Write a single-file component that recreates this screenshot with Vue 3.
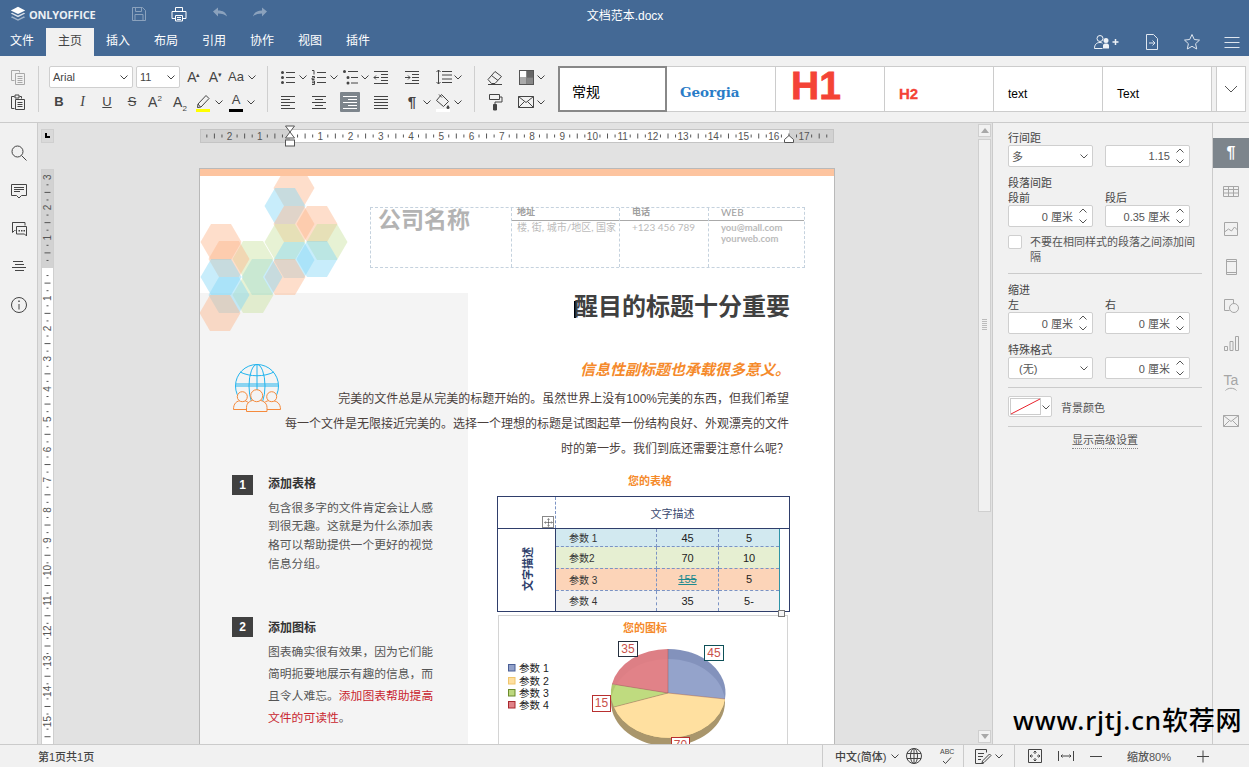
<script setup>
import { h } from 'vue'

const P = {
  search: 'M8.5 3a5.5 5.5 0 1 1 0 11 5.5 5.5 0 0 1 0-11zM12.5 12.5l5 5',
  comment: 'M2.5 3.5h15v11h-5L10 17l-2.5-2.5h-5zM5 6.5h10M5 8.5h10M5 10.5h6',
  chat: 'M3.5 6.5v-3h12.5v3M3.5 3.5v10l2-2h1M7.5 7.5h10v9.5l-2-2h-8z',
  nav: 'M4 4.5h10M6 7.5h9M3 10.5h14M6 13.5h9',
  info: 'M10 2.5a7.5 7.5 0 1 1 0 15 7.5 7.5 0 0 1 0-15zM10 9v5.5',
  save: 'M3.5 3.5h10l3 3v10h-13zM6.5 3.5v4h6v-4M6 16.5v-6h8v6',
  print: 'M6.5 7V3.5h7V7M6.5 14.5h-3.5v-7h14v7h-3.5M6.5 11.5h7v5.5h-7zM8 13.5h4M8 15.5h4',
  copy: 'M3.5 13.5v-10h8v2M6.5 13.5h-3M7.5 6.5h9v11h-9zM9.5 9.5h5M9.5 11.5h5M9.5 13.5h5M9.5 15.5h5',
  paste: 'M6.5 16.5h-3v-12h3M11.5 4.5h2v2M7 3h4v3H7zM7.5 7.5h9v10h-9zM9.5 10.5h5M9.5 12.5h5M9.5 14.5h5',
  bullets: 'M8 5.5h9M8 10.5h9M8 15.5h9',
  numbers: 'M8 5.5h9M8 10.5h9M8 15.5h9M3 3.5h2v4M3 9.5h2.5V11H3v1.5h2.5M3 14h2.5v3.5H3M3 15.7h2.5',
  multi: 'M7 4.5h10M10 10.5h7M10 16h7',
  dec: 'M3 4.5h14M10 7.5h7M10 10.5h7M10 13.5h7M3 16.5h14M8 10.5H3M5 8.5l-2 2 2 2',
  inc: 'M3 4.5h14M10 7.5h7M10 10.5h7M10 13.5h7M3 16.5h14M3 10.5h5M6 8.5l2 2-2 2',
  spacing: 'M8 4.5h10M8 8h10M8 12h10M8 15.5h10M4.5 3v14M2.5 5l2-2 2 2M2.5 15l2 2 2-2',
  left: 'M3 4.5h14M3 7.5h9M3 10.5h14M3 13.5h9M3 16.5h14',
  center: 'M3 4.5h14M6 7.5h8M3 10.5h14M6 13.5h8M3 16.5h14',
  right: 'M3 4.5h14M8 7.5h9M3 10.5h14M8 13.5h9M3 16.5h14',
  justify: 'M3 4.5h14M3 7.5h14M3 10.5h14M3 13.5h14M3 16.5h14',
  erase: 'M3 12.5 10 4.5l6.5 5-6.5 7H6.5zM6.5 8.5l6.5 5M3 17.5h14',
  brush: 'M4.5 2.5h10v5h-10zM14.5 5H17v5h-7v2M8.5 12.5h3V18h-3z',
  mail: 'M2.5 4.5h15v11h-15zM2.5 4.5l7.5 6 7.5-6M2.5 15.5l6-6M17.5 15.5l-6-6',
  pen: 'M5 12l8-8.5 3 3-8 8.5-3.5.5zM5 12l2.5 3',
  bucket: 'M8.5 2.5l7 7-5 5-7-6zM6 2.5l3 3',
  caret: 'M6.5 8.5 10 12l3.5-3.5',
  up: 'M6.5 11.5 10 8l3.5 3.5',
  chev: 'M4 7l6 6 6-6',
  file: 'M4.5 2.5h7l4 4v11h-11zM7 11h6M10.5 8.5 13 11l-2.5 2.5',
  star: 'M10 2.5l2.3 5 5.2.6-3.9 3.6 1.1 5.3-4.7-2.7-4.7 2.7 1.1-5.3-3.9-3.6 5.2-.6z',
  menu: 'M2.5 5.5h15M2.5 10.5h15M2.5 15.5h15',
  page: 'M3.5 3.5h13v13h-13zM10 5v3M8.5 6.5 10 5l1.5 1.5M10 15v-3M8.5 13.5 10 15l1.5-1.5M5 10h3M6.5 8.5 5 10l1.5 1.5M15 10h-3M13.5 8.5 15 10l-1.5 1.5',
  width: 'M2.5 5v10M17.5 5v10M5 10h10M6.5 8.5 5 10l1.5 1.5M13.5 8.5 15 10l-1.5 1.5',
  minus: 'M4 10.5h12',
  plus: 'M4 10.5h12M10 4.5v12',
  globe: 'M10 2.5a7.5 7.5 0 1 1 0 15 7.5 7.5 0 0 1 0-15zM10 2.5a3.5 7.5 0 1 1 0 15 3.5 7.5 0 0 1 0-15zM10 2.5v15M3 7.5h14M3 12.5h14',
  check: 'M9 15l2.5 2.5 5.5-6',
  note: 'M13.5 6.5v-3h-11v14h8M5 7.5h6M5 10.5h5M5 13.5h3M9.5 15l7-7 1.5 1.5-7 7-2 .5z',
  table: 'M2.5 5.5h15v10h-15zM2.5 8.5h15M2.5 12h15M7.5 5.5v10M12.5 5.5v10',
  image: 'M3.5 3.5h13v13h-13zM3.5 13l4-3 3 2 3-4 3 3',
  header: 'M5.5 2.5h10v15h-10zM5.5 4.5h10M5.5 15.5h10',
  shape: 'M8.5 15.5h-5v-11h9v4M13 8.5a4.5 4.5 0 1 1 0 9 4.5 4.5 0 0 1 0-9z',
  chart: 'M3.5 13.5h3v4h-3zM9 8.5h3v9H9zM14.5 3.5h3v14h-3z',
  move: 'M10 3v14M3 10h14M8 5l2-2 2 2M8 15l2 2 2-2M5 8l-2 2 2 2M15 8l2 2-2 2',
}
const F = {
  bullets: 'M4.5 4a1.5 1.5 0 1 0 0 3 1.5 1.5 0 0 0 0-3zM4.5 9a1.5 1.5 0 1 0 0 3 1.5 1.5 0 0 0 0-3zM4.5 14a1.5 1.5 0 1 0 0 3 1.5 1.5 0 0 0 0-3z',
  multi: 'M3.5 3a1.5 1.5 0 1 0 0 3 1.5 1.5 0 0 0 0-3zM7 9a1.5 1.5 0 1 0 0 3 1.5 1.5 0 0 0 0-3zM7 14.5a1.5 1.5 0 1 0 0 3 1.5 1.5 0 0 0 0-3z',
  info: 'M9.3 5.5h1.4v1.4H9.3z',
  chat: 'M9.5 11H11v1.5H9.5zM12 11h1.5v1.5H12zM14.5 11H16v1.5h-1.5z',
  undo: 'M3 7.5 8 3.5v3c5 0 8 2 9 6-2-2-5-3-9-3v3z',
  redo: 'M17 7.5l-5-4v3c-5 0-8 2-9 6 2-2 5-3 9-3v3z',
  brush: 'M8.5 12.5h3V18h-3z',
  bucket: 'M15 13c1.2 1.5 1.5 2 1.5 2.5a1.5 1.5 0 0 1-3 0c0-.5.3-1 1.5-2.5z',
}
const Ico = (props) =>
  h('svg', { width: 20, height: 20, viewBox: '0 0 20 20', class: 'ico', fill: 'none', stroke: 'currentColor' }, [
    P[props.n] ? h('path', { d: P[props.n] }) : null,
    F[props.n] ? h('path', { d: F[props.n], fill: 'currentColor', stroke: 'none' }) : null,
  ])
Ico.props = ['n']

const fontRow1 = [
  { t: 'A', cls: 'grow-a', w: 24, mark: '▴' }, { t: 'A', cls: 'shrink-a', w: 19, mark: '▾' }, { t: 'Aa', cls: 'aa', w: 26 }, { i: 'caret', w: 5 },
]
const fontRow2 = [
  { t: 'B', cls: 'b', w: 20 }, { t: 'I', cls: 'it', w: 27 }, { t: 'U', cls: 'u', w: 22 }, { t: 'S', cls: 's', w: 28 },
  { t: 'A', cls: 'sup', sup: '2', w: 18 }, { t: 'A', cls: 'sub', sub: '2', w: 32 },
  { i: 'pen', bar: '#ffff00', w: 14 }, { i: 'caret', w: 17 }, { t: 'A', bar: '#000', cls: 'col', w: 18 }, { i: 'caret', w: 12 },
]
const listRow1 = [
  { i: 'bullets', w: 20 }, { i: 'caret', w: 10 }, { i: 'numbers', w: 21 }, { i: 'caret', w: 10 }, { i: 'multi', w: 24 }, { i: 'caret', w: 4 },
  { i: 'dec', w: 28 }, { i: 'inc', w: 34 }, { w: 4.5 }, { i: 'spacing', w: 20 }, { i: 'caret', w: 9 },
]
const listRow2 = [
  { i: 'left', w: 20 }, { i: 'center', w: 41 }, { w: 1 }, { i: 'right', w: 20, on: true }, { i: 'justify', w: 42 },
  { t: '¶', cls: 'pil', w: 20 }, { i: 'caret', w: 10 }, { i: 'bucket', bar: '#fff', w: 22 }, { i: 'caret', w: 8 },
]
const styles = [
  { t: '常规', cls: 'st-normal' }, { t: 'Georgia', cls: 'st-georgia' }, { t: 'H1', cls: 'st-h1' },
  { t: 'H2', cls: 'st-h2' }, { t: 'text', cls: 'st-text' }, { t: 'Text', cls: 'st-text' },
]
const sideIcons = ['table', 'image', 'header', 'shape', 'chart']

/* rulers */
const cm = 30.24
const hTicks = []
const hNums = []
for (let k = -11; k <= 71; k++) {
  if (k === 0) continue
  const x = 90 + (k * cm) / 4
  if (x > 632) continue
  if (k % 4 === 0) hNums.push({ x, t: Math.abs(k / 4) })
  else hTicks.push({ x, len: Math.abs(k % 2) === 0 ? 5 : 3 })
}
const vTicks = []
const vNums = []
for (let k = -12; k <= 62; k++) {
  if (k === 0) continue
  const y = 99 + (k * cm) / 4
  if (k % 4 === 0) vNums.push({ y, t: Math.abs(k / 4) })
  else vTicks.push({ y, len: Math.abs(k % 2) === 0 ? 6 : 2 })
}

/* hexagons */
const hexSrc = [
  ['p', 294, 188], ['b', 285, 206], ['p', 294, 224], ['p', 317, 224], ['g', 285, 242], ['g', 327, 242], ['b', 294, 260], ['b', 317, 259],
  ['p', 285, 277], ['b', 262, 277], ['g', 253, 259], ['g', 253, 295], ['p', 221, 242], ['p', 229, 259],
  ['b', 221, 277], ['b', 229, 295], ['p', 220, 313],
]
const hexColor = { p: '#fcb58c', b: '#86d6f6', g: '#c9e3a0' }
const hexes = hexSrc.map(([c, x, y]) => ({
  fill: hexColor[c],
  pts: [[x - 20.5, y], [x - 10, y - 18], [x + 10, y - 18], [x + 20.5, y], [x + 10, y + 18], [x - 10, y + 18]].map((p) => p.join(',')).join(' '),
}))

const tableRows = [
  { cls: 'r1', a: '参数 1', b: '45', c: '5' },
  { cls: 'r2', a: '参数2', b: '70', c: '10' },
  { cls: 'r3', a: '参数 3', b: '155', c: '5', link: true },
  { cls: 'r4', a: '参数 4', b: '35', c: '5-' },
]
const legend = [
  { t: '参数 1', f: '#92a1c9', s: '#4a5f96', y: 668 },
  { t: '参数 2', f: '#fedf9f', s: '#f0c56d', y: 681 },
  { t: '参数 3', f: '#bdd87f', s: '#6b8a2c', y: 693 },
  { t: '参数 4', f: '#e18288', s: '#a8282e', y: 705 },
]
const slices = [
  { d: 'M668 693L668 649A57 44 0 0 1 725 699Z', dark: '#8392bc', light: '#94a3cb' },
  { d: 'M668 693L725 699A57 44 0 0 1 614 707Z', dark: '#f5d78f', light: '#ffe0a0' },
  { d: 'M668 693L614 707A57 44 0 0 1 612 684Z', dark: '#b2c96f', light: '#bfdb7f' },
  { d: 'M668 693L612 684A57 44 0 0 1 668 649Z', dark: '#dd7f85', light: '#e18288' },
]
const labels = [
  { t: '35', x: 618, y: 641, w: 19, h: 15, s: '#26303f' },
  { t: '45', x: 704, y: 645, w: 19, h: 15, s: '#0e5058' },
  { t: '15', x: 592, y: 695, w: 18, h: 16, s: '#b82f2f' },
  { t: '70', x: 671, y: 737, w: 18, h: 15, s: '#b82f2f' },
]
</script>

<template>
  <div class="app">
    <header class="head">
      <div class="title-row">
        <div class="logo">
          <svg width="18" height="20" viewBox="0 0 20 20" class="ico">
            <path d="M10 2 18 6 10 10 2 6z" fill="#fff" />
            <path d="M3.5 8.5 10 11.8l6.5-3.3 1.5 1L10 13.5 2 9.5z" fill="#fff" opacity=".8" />
            <path d="M3.5 12.5 10 15.8l6.5-3.3 1.5 1L10 17.5 2 13.5z" fill="#fff" opacity=".5" />
          </svg>
          <span class="logo-text">ONLYOFFICE</span>
        </div>
        <div class="quick">
          <span class="q dim"><Ico n="save" /></span>
          <span class="q"><Ico n="print" /></span>
          <span class="q dim"><Ico n="undo" /></span>
          <span class="q dim"><Ico n="redo" /></span>
        </div>
        <div class="doc-name">文档范本.docx</div>
      </div>
      <div class="tab-row">
        <nav class="tabs">
          <span class="tab">文件</span>
          <span class="tab active">主页</span>
          <span class="tab">插入</span>
          <span class="tab">布局</span>
          <span class="tab">引用</span>
          <span class="tab">协作</span>
          <span class="tab">视图</span>
          <span class="tab">插件</span>
        </nav>
        <div class="head-right">
          <svg class="ico hr-user" width="28" height="20" viewBox="0 0 28 20" fill="none" stroke="currentColor">
            <path d="M7 3.5a3 3 0 1 1 0 6 3 3 0 0 1 0-6zM1.5 16.5c0-4 2-6 5.5-6 1 0 2 .2 2.5.7M1.5 16.5h8" />
            <path d="M13 6a2.5 2.5 0 1 1 0 5 2.5 2.5 0 0 1 0-5zM10 16.5v-3c0-1.5 1.5-2 3-2s3 .5 3 2v3z" fill="currentColor" stroke="none" />
            <path d="M22.5 7v6M19.5 10h6" stroke-width="1.5" />
          </svg>
          <span class="hr hr-file"><Ico n="file" /></span>
          <span class="hr hr-star"><Ico n="star" /></span>
          <span class="hr hr-menu"><Ico n="menu" /></span>
        </div>
      </div>
    </header>

    <section class="toolbar">
      <div class="grp g1">
        <div class="cellrow"><span class="cell dim-ico wide"><Ico n="copy" /></span></div>
        <div class="cellrow r2"><span class="cell wide"><Ico n="paste" /></span></div>
      </div>
      <div class="grp g2">
        <div class="cellrow">
          <div class="combo font-c"><span>Arial</span><Ico n="caret" /></div>
          <div class="combo size-c"><span>11</span><Ico n="caret" /></div>
          <span v-for="(c, k) in fontRow1" :key="k" class="cell" :style="{ width: c.w + 'px' }">
            <Ico v-if="c.i" :n="c.i" />
            <span v-else class="tx" :class="c.cls">{{ c.t }}<i v-if="c.mark" class="mark">{{ c.mark }}</i></span>
          </span>
        </div>
        <div class="cellrow r2">
          <span v-for="(c, k) in fontRow2" :key="k" class="cell" :style="{ width: c.w + 'px' }">
            <Ico v-if="c.i" :n="c.i" />
            <span v-else class="tx" :class="c.cls">{{ c.t }}<sup v-if="c.sup">{{ c.sup }}</sup><sub v-if="c.sub">{{ c.sub }}</sub></span>
            <i v-if="c.bar" class="bar" :style="{ background: c.bar }"></i>
          </span>
        </div>
      </div>
      <div class="grp g3">
        <div class="cellrow">
          <span v-for="(c, k) in listRow1" :key="k" class="cell" :style="{ width: c.w + 'px' }"><Ico v-if="c.i" :n="c.i" /></span>
        </div>
        <div class="cellrow r2">
          <span v-for="(c, k) in listRow2" :key="k" class="cell" :class="{ on: c.on }" :style="{ width: c.w + 'px' }">
            <Ico v-if="c.i" :n="c.i" />
            <span v-else-if="c.t" class="tx" :class="c.cls">{{ c.t }}</span>
            <i v-if="c.bar" class="bar" :style="{ background: c.bar }"></i>
          </span>
        </div>
      </div>
      <div class="grp g4">
        <div class="cellrow">
          <span class="cell w20"><Ico n="erase" /></span>
          <span class="spacer"></span>
          <span class="cell w20">
            <svg width="15" height="15" viewBox="0 0 15 15" class="ico">
              <rect width="15" height="15" fill="#555" />
              <rect x="1" y="1" width="6.5" height="6.5" fill="#fff" />
              <rect x="7.5" y="1" width="6.5" height="6.5" fill="#666" />
              <rect x="1" y="7.5" width="6.5" height="6.5" fill="#aaa" />
              <rect x="7.5" y="7.5" width="6.5" height="6.5" fill="#888" />
            </svg>
          </span>
          <span class="cell w10"><Ico n="caret" /></span>
        </div>
        <div class="cellrow r2">
          <span class="cell w20"><Ico n="brush" /></span>
          <span class="spacer"></span>
          <span class="cell w20"><Ico n="mail" /></span>
          <span class="cell w10"><Ico n="caret" /></span>
        </div>
      </div>
      <div class="gallery">
        <div v-for="(s, k) in styles" :key="k" class="style-item" :class="{ sel: k === 0 }">
          <span :class="s.cls">{{ s.t }}</span>
        </div>
        <div class="gal-gap"></div>
        <div class="gal-more"><Ico n="chev" /></div>
      </div>
    </section>

    <main class="main">
      <aside class="left-bar">
        <span class="lb"><Ico n="search" /></span>
        <span class="lb"><Ico n="comment" /></span>
        <span class="lb"><Ico n="chat" /></span>
        <span class="lb"><Ico n="nav" /></span>
        <span class="lb"><Ico n="info" /></span>
      </aside>

      <div class="canvas">
        <div class="corner"><i></i></div>
        <svg class="h-ruler" width="634" height="14" viewBox="0 0 634 14">
          <rect width="634" height="14" fill="#d2d2d2" />
          <rect x="90" y="0" width="499" height="14" fill="#fff" />
          <rect x=".5" y=".5" width="633" height="13" fill="none" stroke="#c4c4c4" />
          <line v-for="(t, k) in hTicks" :key="k" :x1="t.x" :x2="t.x" :y1="7 - t.len / 2" :y2="7 + t.len / 2" stroke="#555" />
          <text v-for="n in hNums" :key="n.x" :x="n.x" y="10.5" text-anchor="middle" class="r-num">{{ n.t }}</text>
          <path d="M85.5 -3h9l-4.5 6 4.5 6h-9l4.5-6z" fill="#fff" stroke="#555" />
          <rect x="85.5" y="11" width="9" height="6" fill="#fff" stroke="#555" />
          <path d="M584.5 13.5v-3l4.5-4 4.5 4v3z" fill="#fff" stroke="#555" />
        </svg>
        <svg class="v-ruler" width="13" height="575" viewBox="0 0 13 575">
          <rect width="13" height="575" fill="#fff" />
          <rect width="13" height="99" fill="#d2d2d2" />
          <rect x=".5" y=".5" width="12" height="580" fill="none" stroke="#cfcfcf" />
          <line v-for="t in vTicks" :key="t.y" :x1="6.5 - t.len / 2" :x2="6.5 + t.len / 2" :y1="t.y" :y2="t.y" stroke="#555" />
          <text v-for="n in vNums" :key="n.y" x="6.5" :y="n.y + 3.5" text-anchor="middle" class="r-num"
            :transform="`rotate(-90 6.5 ${n.y})`">{{ n.t }}</text>
        </svg>

        <article class="page">
          <div class="band"></div>
          <svg class="hexes" width="150" height="160" viewBox="200 176 150 160">
            <polygon v-for="(x, k) in hexes" :key="k" :points="x.pts" :fill="x.fill" fill-opacity=".45" />
          </svg>

          <div class="doc-head">
            <div class="dh-cell dh-co">公司名称</div>
            <div class="dh-cell dh-a"><b>地址</b><p>楼, 街, 城市/地区, 国家</p></div>
            <div class="dh-cell dh-b"><b>电话</b><p>+123 456 789</p></div>
            <div class="dh-cell dh-c"><b class="web">WEB</b><p class="strong">you@mall.com<br />yourweb.com</p></div>
          </div>

          <h1 class="doc-title"><i class="cursor"></i>醒目的标题十分重要</h1>
          <h2 class="doc-sub">信息性副标题也承载很多意义。</h2>

          <div class="intro">
            <svg class="world" width="48" height="48" viewBox="0 0 48 48" fill="none">
              <g stroke="#22b4ee" stroke-width="1">
                <circle cx="24" cy="22" r="21.5" />
                <ellipse cx="24" cy="22" rx="8" ry="21.5" />
                <path d="M24 .5v43M3 20h42M3 22h42M7 8c10 5 24 5 34 0" />
              </g>
              <g stroke="#f58a3c" fill="#f4f4f4" stroke-width="1">
                <path d="M.5 45.5c0-6 3-9 8.5-9s9 3 9 9z" />
                <path d="M29 45.5c0-6 3-9 9-9s9.5 3 9.5 9z" />
                <circle cx="9.3" cy="32.7" r="5" />
                <circle cx="38.7" cy="32.7" r="5" />
                <path d="M13.5 47.5v-4c0-5 4-7.5 10-7.5s10.5 2.5 10.5 7.5v4z" />
                <circle cx="23.7" cy="31.7" r="6" />
              </g>
            </svg>
            完美的文件总是从完美的标题开始的。虽然世界上没有100%完美的东西，但我们希望<br />
            每一个文件是无限接近完美的。选择一个理想的标题是试图起草一份结构良好、外观漂亮的文件<br />
            时的第一步。我们到底还需要注意什么呢？
          </div>

          <div class="cols">
            <div class="col-left">
              <section class="step s1">
                <span class="num">1</span>
                <div class="step-text">
                  <h3>添加表格</h3>
                  <p>包含很多字的文件肯定会让人感<br />到很无趣。这就是为什么添加表<br />格可以帮助提供一个更好的视觉<br />信息分组。</p>
                </div>
              </section>
              <section class="step s2">
                <span class="num">2</span>
                <div class="step-text">
                  <h3>添加图标</h3>
                  <p>图表确实很有效果，因为它们能<br />简明扼要地展示有趣的信息，而<br />且令人难忘。<span class="red">添加图表帮助提高<br />文件的可读性</span>。</p>
                </div>
              </section>
            </div>

            <div class="col-right">
              <div class="cap">您的表格</div>
              <div class="tbl-wrap">
                <table class="tbl">
                  <colgroup>
                    <col class="c58" /><col class="c101" /><col class="c62" /><col class="c61" /><col class="c11" />
                  </colgroup>
                  <tbody>
                    <tr class="thead">
                      <td class="corner-td"></td>
                      <td colspan="4" class="th-main">文字描述</td>
                    </tr>
                    <tr v-for="(r, k) in tableRows" :key="k" :class="r.cls">
                      <td v-if="k === 0" rowspan="4" class="vert-td"><span class="vert">文字描述</span></td>
                      <td class="lab">{{ r.a }}</td>
                      <td class="n"><span :class="{ link155: r.link }">{{ r.b }}</span></td>
                      <td class="n">{{ r.c }}</td>
                      <td v-if="k === 0" rowspan="4" class="tail"></td>
                    </tr>
                  </tbody>
                </table>
                <span class="move"><Ico n="move" /></span>
                <span class="resize"></span>
              </div>
              <div class="chart">
                <svg width="288" height="150" viewBox="499 616 288 150">
                  <text x="645" y="632" text-anchor="middle" class="ch-title">您的图标</text>
                  <g v-for="l in legend" :key="l.t">
                    <rect x="508.5" :y="l.y - 3.5" width="6.5" height="6.5" :fill="l.f" :stroke="l.s" />
                    <text x="519" :y="l.y + 4" class="ch-leg">{{ l.t }}</text>
                  </g>
                  <ellipse cx="668" cy="702" rx="57" ry="44" fill="#a9966c" />
                  <defs>
                    <clipPath id="innerPie"><ellipse cx="668" cy="703" rx="57" ry="44" /></clipPath>
                  </defs>
                  <path v-for="s in slices" :key="s.d" :d="s.d" :fill="s.dark" />
                  <g clip-path="url(#innerPie)">
                    <path v-for="s in slices" :key="s.d" :d="s.d" :fill="s.light" />
                  </g>
                  <path d="M668 693V649M668 693l57 6M668 693l-54 14M668 693l-56-9" stroke="#9a5a5a" stroke-opacity=".45" fill="none" />
                  <g v-for="l in labels" :key="l.t">
                    <rect :x="l.x + .5" :y="l.y + .5" :width="l.w" :height="l.h" fill="#fff" :stroke="l.s" />
                    <text :x="l.x + l.w / 2 + .5" :y="l.y + 12" text-anchor="middle" class="ch-lab">{{ l.t }}</text>
                  </g>
                </svg>
              </div>
            </div>
          </div>
        </article>

        <div class="vscroll">
          <span class="sb-btn"><i class="tri-up"></i></span>
          <span class="sb-thumb"><i></i></span>
          <span class="sb-fill"></span>
          <span class="sb-btn"><i class="tri-down"></i></span>
        </div>
      </div>

      <aside class="panel">
        <div class="lbl">行间距</div>
        <div class="two">
          <div class="inp sel-i"><span>多</span><Ico n="caret" /></div>
          <div class="inp num-i"><span>1.15</span><span class="spin"><Ico n="up" /><Ico n="caret" /></span></div>
        </div>
        <div class="lbl mt7">段落间距</div>
        <div class="two sub-lbl"><span>段前</span><span>段后</span></div>
        <div class="two">
          <div class="inp num-i"><span>0 厘米</span><span class="spin"><Ico n="up" /><Ico n="caret" /></span></div>
          <div class="inp num-i"><span>0.35 厘米</span><span class="spin"><Ico n="up" /><Ico n="caret" /></span></div>
        </div>
        <label class="chk"><i class="box"></i><span>不要在相同样式的段落之间添加间隔</span></label>
        <hr class="sep s8" />
        <div class="lbl mt7">缩进</div>
        <div class="two sub-lbl"><span>左</span><span>右</span></div>
        <div class="two">
          <div class="inp num-i"><span>0 厘米</span><span class="spin"><Ico n="up" /><Ico n="caret" /></span></div>
          <div class="inp num-i"><span>0 厘米</span><span class="spin"><Ico n="up" /><Ico n="caret" /></span></div>
        </div>
        <div class="lbl mt7">特殊格式</div>
        <div class="two">
          <div class="inp sel-i none"><span>(无)</span><Ico n="caret" /></div>
          <div class="inp num-i"><span>0 厘米</span><span class="spin"><Ico n="up" /><Ico n="caret" /></span></div>
        </div>
        <hr class="sep s8" />
        <div class="bg-row">
          <div class="color-btn">
            <svg width="31" height="17" viewBox="0 0 31 17"><rect x=".5" y=".5" width="30" height="16" fill="#fff" stroke="#ccc" /><path d="M1 16 30 1" stroke="#e8222c" /></svg>
            <Ico n="caret" />
          </div>
          <span>背景颜色</span>
        </div>
        <hr class="sep s9" />
        <div class="adv"><span>显示高级设置</span></div>
      </aside>

      <aside class="side-tabs">
        <span class="st active-st">¶</span>
        <span v-for="n in sideIcons" :key="n" class="st"><Ico :n="n" /></span>
        <span class="st ta">
          <span>Ta</span>
          <svg width="12" height="4" viewBox="0 0 12 4" fill="none" stroke="currentColor"><path d="M.5 3.5C3 .5 9 .5 11.5 3.5" /></svg>
        </span>
        <span class="st"><Ico n="mail" /></span>
      </aside>
    </main>

    <footer class="status">
      <span class="pages">第1页共1页</span>
      <div class="stat-right">
        <span class="st-lang">中文(简体)</span>
        <span class="w-caret"><Ico n="caret" /></span>
        <span class="w-globe"><Ico n="globe" /></span>
        <span class="w-abc"><span class="abc">ABC</span><Ico n="check" /></span>
        <span class="w-note"><Ico n="note" /></span>
        <span class="w-caret2"><Ico n="caret" /></span>
        <span class="w-page"><Ico n="page" /></span>
        <span class="w-width"><Ico n="width" /></span>
        <span class="w-minus"><Ico n="minus" /></span>
        <span class="w-zoom">缩放80%</span>
        <span class="w-plus"><Ico n="plus" /></span>
      </div>
    </footer>

    <div class="watermark">www.rjtj.cn软荐网</div>
  </div>
</template>

<style>
html, body { margin: 0; padding: 0; }
</style>

<style scoped>
.app {
  position: relative;
  width: 1249px;
  height: 767px;
  display: flex;
  flex-direction: column;
  overflow: hidden;
  font-family: "Liberation Sans", "Noto Sans CJK SC", sans-serif;
  font-size: 12px;
  color: #444;
  background: #f1f1f1;
}
.ico { display: block; flex-shrink: 0; overflow: visible; }

/* header */
.head { background: #446995; color: #fff; height: 56px; flex-shrink: 0; }
.title-row { height: 28px; display: flex; align-items: center; position: relative; }
.logo { display: flex; align-items: center; margin-left: 9px; width: 110px; }
.logo-text { font-size: 11px; font-weight: 700; margin-left: 2px; opacity: .9; font-family: "Open Sans", "Liberation Sans", sans-serif; letter-spacing: -.2px; }
.quick { display: flex; }
.q { width: 40.3px; display: flex; justify-content: center; }
.q.dim { opacity: .38; }
.doc-name { position: absolute; left: 0; right: 0; text-align: center; font-size: 12px; padding-left: 1px; }
.tab-row { height: 28px; display: flex; justify-content: space-between; }
.tabs { display: flex; margin-left: -2px; }
.tab { width: 48px; text-align: center; line-height: 27px; }
.tab.active { background: #f1f1f1; color: #444; }
.head-right { display: flex; align-items: center; }
.hr-user { margin-right: 21px; color: #eef2f7; }
.hr { display: flex; color: #dfe6ef; }
.hr-file { margin-right: 20px; }
.hr-star { margin-right: 20px; }
.hr-menu { margin-right: 7px; }

/* toolbar */
.toolbar {
  height: 67px; flex-shrink: 0; box-sizing: border-box; padding-top: 10px;
  display: flex; align-items: flex-start; border-bottom: 1px solid #cbcbcb; background: #f1f1f1; color: #444;
}
.grp { height: 46px; box-sizing: border-box; flex-shrink: 0; }
.g1 { width: 39px; border-right: 1px solid #cfcfcf; }
.g2 { width: 229px; border-right: 1px solid #cfcfcf; padding-left: 10px; }
.g3 { width: 207px; border-right: 1px solid #cfcfcf; padding-left: 10px; }
.g4 { width: 83px; padding-left: 10px; }
.cellrow { height: 22px; display: flex; align-items: center; }
.cellrow.r2 { height: 20px; margin-top: 4px; }
.cell { height: 20px; display: flex; align-items: center; justify-content: center; flex-shrink: 0; position: relative; }
.wide { width: 36px; }
.w20 { width: 20px; }
.w10 { width: 10px; }
.spacer { width: 11px; flex-shrink: 0; }
.dim-ico { color: #a8a8a8; }
.cell.on { background: #7d858c; color: #fff; border-radius: 1px; }
.combo {
  height: 22px; box-sizing: border-box; background: #fff; border: 1px solid #cfcfcf; border-radius: 2px;
  display: flex; align-items: center; justify-content: space-between; padding-left: 3px; font-size: 11px; margin-right: 3px;
}
.combo .ico { margin-right: -2px; }
.font-c { width: 84px; }
.size-c { width: 44px; margin-right: 0; }
.tx { font-size: 14px; line-height: 20px; color: #444; position: relative; }
.tx.b { font-weight: 700; font-size: 13px; }
.tx.it { font-style: italic; font-family: "Liberation Serif", serif; font-size: 14px; }
.tx.u { text-decoration: underline; font-size: 13px; }
.tx.s { text-decoration: line-through; font-size: 13px; }
.tx.aa { font-size: 13px; }
.tx.pil { font-weight: 700; font-size: 15px; }
.tx sup, .tx sub { font-size: 8px; line-height: 0; }
.mark { font-style: normal; font-size: 7px; position: absolute; left: 9px; top: -2px; }
.tx.col { font-size: 13px; line-height: 14px; margin-top: -4px; }
.bar { position: absolute; left: 50%; margin-left: -7px; bottom: 0; width: 14px; height: 3px; }

.gallery { width: 688px; height: 46px; box-sizing: border-box; display: flex; background: #fff; border: 1px solid #ccc; }
.style-item { width: 109px; box-sizing: border-box; border-right: 1px solid #ccc; display: flex; align-items: flex-end; padding: 0 0 10px 14px; color: #000; flex-shrink: 0; }
.style-item.sel { border: 2px solid #888; padding: 0 0 9px 12px; margin: -1px 0 -1px -1px; height: 46px; width: 109px; }
.st-normal { font-size: 14px; line-height: 18px; }
.st-georgia { font-family: "DejaVu Serif", serif; font-weight: 700; font-size: 13.5px; color: #2a7cc7; line-height: 18px; margin-left: -1px; }
.st-h1 { font-weight: 700; font-size: 39px; color: #f44336; line-height: 30px; margin-left: 1px; -webkit-text-stroke: .8px #f44336; }
.st-h2 { font-weight: 700; font-size: 15px; color: #f44336; line-height: 14px; -webkit-text-stroke: .3px #f44336; }
.st-text { font-size: 12px; line-height: 14px; }
.gal-gap { width: 4px; border-right: 1px solid #ccc; background: #f1f1f1; }
.gal-more { flex: 1; display: flex; align-items: center; justify-content: center; color: #555; }

/* main */
.main { flex: 1; min-height: 0; display: flex; }
.left-bar { width: 37px; flex-shrink: 0; border-right: 1px solid #cbcbcb; display: flex; flex-direction: column; align-items: center; padding-top: 20px; gap: 18px; color: #444; }
.lb { height: 20px; display: flex; }
.canvas {
  position: relative; width: 954px; flex-shrink: 0; overflow: hidden; background: #e2e2e2;
  border-right: 1px solid #cbcbcb; padding-top: 6px;
  display: grid; grid-template-columns: 3px 14px 144px 636px; grid-template-rows: 14px 1fr; align-content: start;
}
.corner { grid-column: 2; grid-row: 1; width: 13px; height: 14px; box-sizing: border-box; background: #d9d9d9; border: 1px solid #cfcfcf; position: relative; }
.corner i { position: absolute; left: 3px; top: 3px; width: 5px; height: 5px; border-left: 2px solid #000; border-bottom: 2px solid #000; box-sizing: border-box; }
.h-ruler { grid-column: 4; grid-row: 1; margin-left: 1px; overflow: visible; display: block; }
.v-ruler { grid-column: 2; grid-row: 2; margin-top: 26px; display: block; }
.r-num { font-size: 10px; fill: #555; }
.page {
  grid-column: 4; grid-row: 2; margin-top: 25px; height: 800px; box-sizing: border-box; position: relative;
  border: 1px solid #b9b9b9;
  background: linear-gradient(#f4f4f4, #f4f4f4) no-repeat 0 124px / 268px 100%, #fff;
  color: #444;
}
.band { height: 7px; background: #fdc49f; }
.hexes { position: absolute; left: 0; top: 7px; }
.doc-head {
  display: flex; margin: 31px 0 0 170px; width: 435px; height: 61px; box-sizing: border-box;
  border: 1px dashed #c5d2de; position: relative;
}
.dh-cell { box-sizing: border-box; font-size: 9px; color: #b5b5b5; height: 100%; }
.dh-co { width: 140px; font-size: 23px; font-weight: 700; color: #b3b3b3; padding-left: 7px; line-height: 25px; }
.dh-a, .dh-b, .dh-c { border-left: 1px dashed #c5d2de; }
.dh-a { width: 108px; }
.dh-b { width: 89px; }
.dh-c { flex: 1; }
.dh-cell b { display: block; height: 12px; line-height: 9px; border-bottom: 1px solid #aaa; padding-left: 5px; font-size: 9px; color: #a0a0a0; box-sizing: content-box; }
.dh-b b { padding-left: 12px; }
.dh-c b { padding-left: 12px; font-weight: 400; font-family: Lato, sans-serif; font-size: 10px; line-height: 8px; }
.dh-cell p { margin: 0; padding: 1px 0 0 5px; line-height: 11px; font-size: 10px; font-family: Lato, "Noto Sans CJK SC", sans-serif; color: #bbb; }
.dh-b p { padding-left: 12px; font-size: 10px; }
.dh-c p { padding-left: 12px; font-size: 9.5px; font-weight: 700; }
.doc-title { margin: 24px 44px 0 0; text-align: right; font-size: 24px; line-height: 30px; font-weight: 700; color: #404040; }
.cursor { display: inline-block; width: 2px; height: 17px; background: #000; margin-right: -2px; vertical-align: -3px; }
.doc-sub { margin: 38px 44px 0 0; text-align: right; font-size: 15px; line-height: 20px; font-weight: 700; font-style: italic; color: #f58a2b; }
.intro { position: relative; margin: 6.5px 45px 0 0; text-align: right; line-height: 25px; color: #4a403c; }
.world { position: absolute; left: 33px; top: -23px; overflow: visible; }
.cols { display: flex; }
.col-left { width: 265px; margin-left: 32px; flex-shrink: 0; }
.col-right { width: 293px; }
.step { display: flex; gap: 15px; }
.s1 { margin-top: 13.5px; }
.s2 { margin-top: 43.6px; }
.num { width: 21px; height: 20px; background: #404040; color: #fff; font-weight: 700; text-align: center; line-height: 20px; font-size: 12px; flex-shrink: 0; }
.step h3 { margin: 1px 0 0; font-size: 12px; line-height: 16px; font-weight: 700; color: #333; }
.step p { margin: 6.6px 0 0; line-height: 18.7px; color: #555; font-size: 11.8px; }
.s2 h3 { margin-top: 3px; }
.s2 p { margin-top: 5px; line-height: 22px; }
.red { color: #c9252f; }
.cap { margin: 12.5px 0 0 13px; text-align: center; font-size: 11px; font-weight: 700; line-height: 14px; color: #f58a2b; height: 14px; width: 280px; }
.tbl-wrap { position: relative; margin-top: 8px; height: 116px; }
.tbl { table-layout: fixed; width: 292px; height: 116px; border-collapse: collapse; border: 1px solid #2f3e6b; font-size: 10px; color: #333; }
.tbl td { padding: 0; }
.c58 { width: 58px; }
.c101 { width: 101px; }
.c62 { width: 62px; }
.c61 { width: 61px; }
.c11 { width: 10px; }
.thead { height: 32px; }
.corner-td { border-right: 1px dashed #7b93c4; border-bottom: 1px solid #2f3e6b; }
.th-main { text-align: center; font-size: 11px; color: #3b4a70; border-bottom: 1px solid #2f3e6b; }
.vert-td { border-right: 1px solid #2f3e6b; text-align: center; }
.vert { writing-mode: vertical-rl; text-orientation: sideways; transform: rotate(180deg); font-weight: 700; font-size: 11px; color: #2f3e6b; display: inline-block; white-space: nowrap; }
.r1 { height: 18px; }
.r2 { height: 21px; }
.r3 { height: 22px; }
.r4 { height: 21px; }
.tbl tr:not(.thead) .lab, .tbl tr:not(.thead) .n { border-right: 1px dashed #7b93c4; border-bottom: 1px dashed #7b93c4; }
.tbl tr .n:nth-last-child(1), .tbl .r1 .n:nth-last-child(2) { border-right: 1px solid #2e94a8; }
.tbl .tail { border-left: 1px solid #2e94a8; }
.r1 td:not(.vert-td):not(.tail) { background: #d2e9f0; }
.r2 td { background: #e6efd2; }
.r3 td { background: #fcd4b8; }
.r4 td { background: #f1f1f1; }
.tbl .lab { padding-left: 13px; font-size: 10px; }
.tbl .n { text-align: center; font-size: 11px; color: #222; }
.link155 { color: #1d8a8f; text-decoration: underline line-through; }
.move { position: absolute; left: 45px; top: 20px; width: 12px; height: 12px; background: #fff; border: 1px solid #888; box-sizing: border-box; display: flex; align-items: center; justify-content: center; color: #333; }
.move .ico { width: 11px; height: 11px; }
.resize { position: absolute; left: 281px; top: 114px; width: 7px; height: 7px; box-sizing: border-box; border: 1px solid #777; background: #f5f5f5; }
.chart { margin: 3px 0 0 1px; width: 290px; height: 150px; box-sizing: border-box; border: 1px solid #d4d4d4; background: #fff; }
.chart svg { display: block; }
.ch-title { font-size: 11px; font-weight: 700; fill: #f58a2b; }
.ch-leg { font-size: 10.5px; fill: #222; }
.ch-lab { font-size: 12px; fill: #c9504a; }
.vscroll { position: absolute; top: 1px; left: 940px; width: 13px; bottom: 1px; display: flex; flex-direction: column; gap: 1.5px; }
.sb-btn { height: 13px; box-sizing: border-box; border: 1px solid #cfcfcf; background: #f1f1f1; display: flex; align-items: center; justify-content: center; flex-shrink: 0; }
.tri-up { border: 4px solid transparent; border-top: 0; border-bottom: 5px solid #a8a8a8; }
.tri-down { border: 4px solid transparent; border-bottom: 0; border-top: 5px solid #a8a8a8; }
.sb-thumb { height: 373px; box-sizing: border-box; border: 1px solid #cfcfcf; background: #f1f1f1; display: flex; align-items: center; justify-content: center; flex-shrink: 0; }
.sb-thumb i { width: 5px; height: 12px; background: repeating-linear-gradient(#bbb 0 1px, transparent 1px 2px); }
.sb-fill { flex: 1; }

.panel { width: 220px; flex-shrink: 0; box-sizing: border-box; padding: 6px 0 0 15px; border-right: 1px solid #cbcbcb; background: #f1f1f1; font-size: 11px; }
.lbl { height: 16px; line-height: 18px; color: #444; }
.mt7 { margin-top: 7px; }
.two { display: flex; gap: 12px; }
.two > * { width: 85px; flex-shrink: 0; }
.sub-lbl { height: 15px; line-height: 17px; }
.inp { height: 22px; box-sizing: border-box; background: #fff; border: 1px solid #cfcfcf; border-radius: 2px; display: flex; align-items: center; position: relative; color: #555; }
.sel-i { justify-content: space-between; padding-left: 3px; }
.sel-i .ico { margin-right: -2px; }
.sel-i.none { padding-left: 10px; }
.num-i { justify-content: flex-end; padding-right: 19px; }
.spin { position: absolute; right: -1px; top: 0; width: 20px; height: 20px; }
.spin .ico { position: absolute; left: 0; color: #555; }
.spin .ico:first-child { top: -5px; }
.spin .ico:last-child { top: 5px; }
.chk { display: flex; margin-top: 8px; width: 187px; line-height: 15px; color: #555; }
.box { width: 14px; height: 14px; box-sizing: border-box; background: #fff; border: 1px solid #cfcfcf; border-radius: 2px; flex-shrink: 0; margin: 0 8px 0 0; }
.chk span { width: 166px; flex-shrink: 0; }
.sep { width: 194px; height: 1px; border: 0; background: #cbcbcb; margin: 0; }
.s8 { margin-top: 8px; }
.s9 { margin-top: 9px; }
.bg-row { display: flex; align-items: center; margin-top: 8px; gap: 9px; color: #555; }
.color-btn { width: 44px; height: 21px; box-sizing: border-box; background: #fff; border: 1px solid #cfcfcf; border-radius: 2px; display: flex; align-items: center; padding-left: 1px; }
.color-btn svg:first-child { flex-shrink: 0; }
.color-btn .ico:last-child { margin-left: -5px; }
.adv { width: 194px; text-align: center; margin-top: 6px; line-height: 15px; color: #555; }
.adv span { border-bottom: 1px dotted #888; display: inline-block; }

.side-tabs { flex: 1; display: flex; flex-direction: column; align-items: center; padding-top: 15px; color: #a6a6a6; }
.st { height: 38px; width: 100%; display: flex; align-items: center; justify-content: center; flex-shrink: 0; }
.active-st { height: 30px; background: #7d858c; color: #fff; font-weight: 700; font-size: 16px; margin-bottom: 4px; }
.ta { font-size: 14px; height: 40px; flex-direction: column; line-height: 14px; }

.status { height: 23px; flex-shrink: 0; box-sizing: border-box; border-top: 1px solid #cbcbcb; background: #f1f1f1; display: flex; align-items: center; position: relative; color: #444; }
.pages { margin-left: 38px; font-size: 11px; font-weight: 500; color: #444; }
.stat-right { margin-left: auto; display: flex; align-items: center; height: 100%; width: 427px; border-left: 1px solid #cbcbcb; box-sizing: border-box; }
.stat-right > span { flex-shrink: 0; display: flex; align-items: center; justify-content: center; height: 100%; box-sizing: border-box; }
.stat-right > .st-lang { margin-left: 12px; font-size: 11px; width: 52px; white-space: nowrap; font-weight: 500; justify-content: flex-start; }
.w-caret { width: 16px; }
.w-globe { width: 22px; }
.w-abc { width: 39px; position: relative; border-right: 1px solid #cbcbcb; }
.abc { font-size: 7px; position: absolute; left: 15px; top: 3px; line-height: 8px; }
.stat-right > .w-note { width: 20px; margin-left: 9px; }
.w-caret2 { width: 12px; }
.stat-right > .w-page { width: 41px; margin-left: 9px; border-left: 1px solid #cbcbcb; }
.w-width { width: 21px; }
.w-minus { width: 40px; }
.stat-right > .w-zoom { width: 44px; margin-left: 11px; font-size: 11px; white-space: nowrap; font-weight: 500; color: #555; }
.w-plus { width: 64px; }

.watermark { position: absolute; left: 1013px; top: 702px; font-family: "Noto Sans", "Noto Sans CJK SC", sans-serif; font-size: 26px; letter-spacing: .8px; font-weight: 500; color: #000; line-height: 36px; white-space: nowrap; }
</style>
